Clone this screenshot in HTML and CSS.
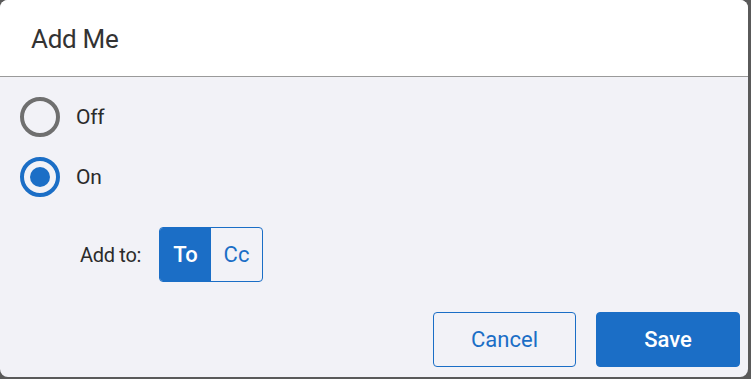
FILE: index.html
```html
<!DOCTYPE html>
<html lang="en">
<head>
<meta charset="utf-8">
<title>Add Me</title>
<link rel="stylesheet" href="styles.css">
</head>
<body>
<div class="dialog">
  <div class="dialog-header">
    <h1 class="dialog-title">Add Me</h1>
  </div>
  <div class="dialog-body">
    <label class="radio-row">
      <span class="radio"></span>
      <span class="radio-label">Off</span>
    </label>
    <label class="radio-row">
      <span class="radio radio-checked"><span class="radio-dot"></span></span>
      <span class="radio-label">On</span>
    </label>
    <div class="add-to">
      <span class="add-to-label">Add to:</span>
      <div class="segmented">
        <span class="seg seg-active">To</span>
        <span class="seg">Cc</span>
      </div>
    </div>
    <div class="actions">
      <button class="btn btn-outline">Cancel</button>
      <button class="btn btn-primary">Save</button>
    </div>
  </div>
</div>
</body>
</html>
```
FILE: styles.css
```css
html, body {
  margin: 0;
  padding: 0;
}
body {
  background: #5a5a5a;
  width: 751px;
  height: 379px;
  overflow: hidden;
  font-family: Roboto, "Noto Sans", sans-serif;
  color: #2b2b2b;
}
.dialog {
  width: 748px;
  height: 377px;
  border-radius: 8px;
  overflow: hidden;
  background: #f2f2f7;
  display: flex;
  flex-direction: column;
}
.dialog-header {
  background: #ffffff;
  height: 76px;
  border-bottom: 1px solid #9a9a9a;
  display: flex;
  align-items: center;
  padding-left: 31px;
  flex-shrink: 0;
}
.dialog-title {
  margin: 0;
  font-size: 26px;
  font-weight: 400;
  color: #333333;
  padding-top: 2px;
  letter-spacing: -0.3px;
}
.dialog-body {
  padding: 20px 8px 0 20px;
  display: flex;
  flex-direction: column;
}
.radio-row {
  display: flex;
  align-items: center;
  height: 40px;
  margin-bottom: 20px;
}
.radio {
  width: 40px;
  height: 40px;
  box-sizing: border-box;
  border: 4.5px solid #6f6f6f;
  border-radius: 50%;
  display: flex;
  align-items: center;
  justify-content: center;
}
.radio-checked {
  border-color: #1b6ec6;
}
.radio-dot {
  width: 20px;
  height: 20px;
  border-radius: 50%;
  background: #1b6ec6;
}
.radio-label {
  margin-left: 16px;
  font-size: 21px;
  color: #2b2b2b;
  letter-spacing: -0.3px;
}
.add-to {
  display: flex;
  align-items: center;
  margin-top: 10px;
  padding-left: 60px;
}
.add-to-label {
  font-size: 20px;
  width: 79px;
  color: #2b2b2b;
  letter-spacing: -0.3px;
}
.segmented {
  display: flex;
  height: 55px;
  box-sizing: border-box;
  border: 1px solid #1b6ec6;
  border-radius: 4px;
  overflow: hidden;
}
.seg {
  width: 51px;
  display: flex;
  align-items: center;
  justify-content: center;
  font-size: 22px;
  color: #1b6ec6;
}
.seg-active {
  background: #1b6ec6;
  color: #ffffff;
  font-weight: 500;
}
.actions {
  display: flex;
  justify-content: flex-end;
  gap: 20px;
  margin-top: 30px;
}
.btn {
  height: 55px;
  border-radius: 4px;
  font-family: Roboto, "Noto Sans", sans-serif;
  font-size: 22px;
  box-sizing: border-box;
  cursor: pointer;
}
.btn-outline {
  width: 143px;
  background: transparent;
  border: 1px solid #1b6ec6;
  color: #1b6ec6;
}
.btn-primary {
  width: 144px;
  background: #1b6ec6;
  border: 1px solid #1b6ec6;
  color: #ffffff;
  font-weight: 500;
}
```
